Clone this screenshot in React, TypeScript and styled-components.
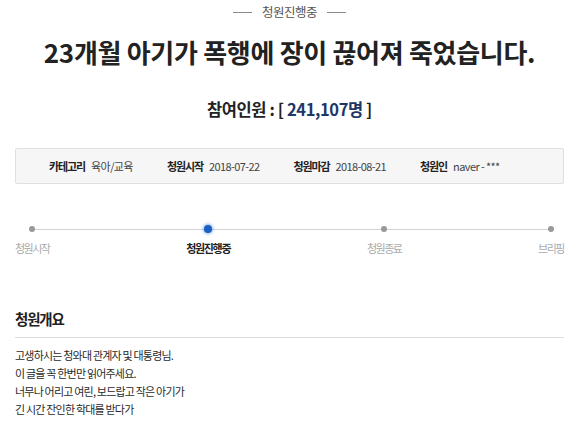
import styled, { createGlobalStyle } from 'styled-components'

const GlobalStyle = createGlobalStyle`
  html, body {
    margin: 0;
    padding: 0;
    background: #fff;
  }
  body {
    font-family: "Noto Sans CJK KR", "Noto Sans", sans-serif;
    color: #222;
  }
`

const STEPS = [
  { label: '청원시작', active: false },
  { label: '청원진행중', active: true },
  { label: '청원종료', active: false },
  { label: '브리핑', active: false },
]

const INFO = [
  { name: '카테고리', value: '육아/교육' },
  { name: '청원시작', value: '2018-07-22' },
  { name: '청원마감', value: '2018-08-21' },
  { name: '청원인', value: 'naver - ***' },
]

const BODY = [
  '고생하시는 청와대 관계자 및 대통령님.',
  '이 글을 꼭 한번만 읽어주세요.',
  '너무나 어리고 여린, 보드랍고 작은 아기가',
  '긴 시간 잔인한 학대를 받다가',
]

const App = () => {
  return <Page>
    <GlobalStyle/>
    <Status>청원진행중</Status>
    <Title>23개월 아기가 폭행에 장이 끊어져 죽었습니다.</Title>
    <Counter>참여인원 : [ <Count>241,107명</Count> ]</Counter>
    <InfoBox>
      {INFO.map(item => (
        <InfoItem key={item.name}>
          <InfoName>{item.name}</InfoName>
          <InfoValue>{item.value}</InfoValue>
        </InfoItem>
      ))}
    </InfoBox>
    <Progress>
      {STEPS.map(step => (
        <Step key={step.label}>
          <Dot $active={step.active}/>
          <StepLabel $active={step.active}>{step.label}</StepLabel>
        </Step>
      ))}
    </Progress>
    <Section>
      <SectionTitle>청원개요</SectionTitle>
      <SectionBody>
        {BODY.map(line => <p key={line}>{line}</p>)}
      </SectionBody>
    </Section>
  </Page>
}

const Page = styled.div`
  margin: 0 16px 0 15px;
  display: flex;
  flex-direction: column;
`
const Status = styled.div`
  display: flex;
  justify-content: center;
  align-items: center;
  gap: 10px;
  font-size: 12.5px;
  letter-spacing: -0.5px;
  color: #555;
  margin-top: 4px;
  line-height: 16px;
  &::before, &::after {
    content: '';
    width: 19px;
    height: 1px;
    background: #8a8a8a;
  }
`
const Title = styled.h1`
  margin: 15px 0 0;
  text-align: center;
  font-size: 26px;
  font-weight: 700;
  letter-spacing: -0.3px;
  line-height: 34px;
  color: #222;
`
const Counter = styled.div`
  margin-top: 28px;
  text-align: center;
  font-size: 16.5px;
  font-weight: 700;
  line-height: 24px;
  color: #222;
  letter-spacing: -0.4px;
`
const Count = styled.span`
  color: #1d3766;
`
const InfoBox = styled.div`
  margin-top: 27px;
  height: 34px;
  border: 1px solid #dfdfdf;
  border-radius: 2px;
  background: #f6f6f6;
  display: flex;
  align-items: center;
  padding-left: 33px;
  gap: 34px;
  font-size: 11px;
`
const InfoItem = styled.div`
  display: flex;
  gap: 6px;
  align-items: baseline;
`
const InfoName = styled.span`
  font-weight: 700;
  color: #222;
  letter-spacing: -1.1px;
`
const InfoValue = styled.span`
  color: #444;
  letter-spacing: -0.6px;
`
const Progress = styled.div`
  margin-top: 41px;
  display: flex;
  justify-content: space-between;
  position: relative;
  &::before {
    content: '';
    position: absolute;
    top: 4px;
    left: 18px;
    right: 14px;
    height: 1px;
    background: #d3d3d3;
  }
`
const Step = styled.div`
  display: flex;
  flex-direction: column;
  align-items: center;
  gap: 8px;
  position: relative;
`
const Dot = styled.span<{ $active: boolean }>`
  width: ${p => (p.$active ? 8 : 6)}px;
  height: ${p => (p.$active ? 8 : 6)}px;
  margin: ${p => (p.$active ? 0 : 1)}px 0;
  border-radius: 50%;
  background: ${p => (p.$active ? '#1a5fc2' : '#999')};
  box-shadow: ${p => (p.$active ? '0 0 3px 1px rgba(60, 130, 230, 0.6)' : 'none')};
`
const StepLabel = styled.span<{ $active: boolean }>`
  font-size: 11px;
  line-height: 14px;
  letter-spacing: ${p => (p.$active ? -1.3 : -1.5)}px;
  font-weight: ${p => (p.$active ? 700 : 400)};
  color: ${p => (p.$active ? '#222' : '#aaa')};
`
const Section = styled.div`
  margin-top: 53px;
`
const SectionTitle = styled.h2`
  margin: 0;
  font-size: 14.5px;
  font-weight: 700;
  line-height: 22px;
  letter-spacing: -1.2px;
  padding-bottom: 7px;
  border-bottom: 1px solid #dcdcdc;
  color: #222;
`
const SectionBody = styled.div`
  padding-top: 8px;
  font-size: 11px;
  color: #2a2a2a;
  letter-spacing: -0.8px;
  p {
    margin: 0;
    line-height: 18px;
  }
`

export default App
